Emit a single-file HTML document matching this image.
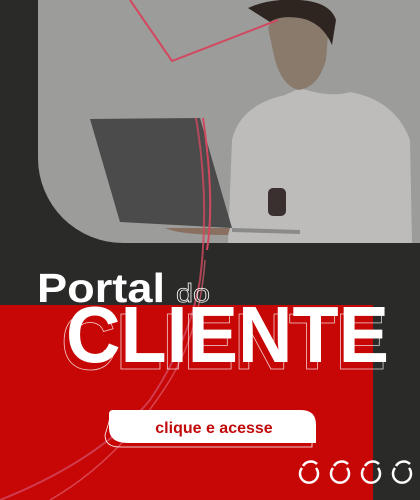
<!DOCTYPE html>
<html><head><meta charset="utf-8"><style>
html,body{margin:0;padding:0}
body{width:420px;height:500px;overflow:hidden;position:relative;background:#2a2b29;font-family:"Liberation Sans",sans-serif}
.abs{position:absolute}
</style></head><body>
<div class="abs" style="left:38px;top:0;width:382px;height:243px;background:#9c9c9a;border-bottom-left-radius:85px"></div>
<div class="abs" style="left:0;top:305px;width:373px;height:195px;background:#c70606"></div>
<svg class="abs" style="left:0;top:0" width="420" height="500">
  <path d="M228 243 L232 140 Q240 105 285 95 L300 88 Q330 98 350 92 Q395 100 410 140 L412 243 Z" fill="#bdbcba"/>
  <path d="M268 28 Q275 12 300 12 Q325 14 328 35 L326 60 Q318 88 298 90 Q282 85 275 60 Z" fill="#8a7a6c"/>
  <path d="M248 8 Q270 -2 300 0 Q330 2 336 20 L332 45 Q322 22 300 18 Q280 15 270 22 Z" fill="#2e2420"/>
  <path d="M90 119 L200 118 L232 228 L120 222 Z" fill="#4b4b4b"/>
  <path d="M232 228 L300 230 L300 234 L232 232 Z" fill="#8a8a8a"/>
  <path d="M165 228 Q180 235 228 235 L230 228 Z" fill="#8a7060"/>
  <rect x="268" y="188" width="18" height="28" rx="5" fill="#3a3030"/>
  <path d="M130 0 L172 61 L278 20" stroke="#d2485f" stroke-width="2" fill="none"/>
  <path d="M196 118 Q210 200 200 280 Q190 340 150 400 Q100 460 0 500" stroke="#d2485f" stroke-width="2" fill="none" opacity=".8"/>
  <path d="M203 118 Q215 200 207 250" stroke="#d2485f" stroke-width="2" fill="none"/>
  <path d="M205 260 Q200 330 170 380 Q120 460 50 500" stroke="#e06070" stroke-width="1.5" fill="none" opacity=".7"/>
  <text x="37" y="302" font-size="41" font-weight="bold" fill="#fff" textLength="128" lengthAdjust="spacingAndGlyphs">Portal</text>
  <text x="176" y="302" font-size="26" fill="none" stroke="#fff" stroke-width="0.7" textLength="34" lengthAdjust="spacingAndGlyphs">do</text>
  <text x="61" y="369" font-size="80" font-weight="bold" fill="none" stroke="#fff" stroke-width="0.8" textLength="325" lengthAdjust="spacingAndGlyphs" opacity=".8">CLIENTE</text>
  <text x="66" y="362" font-size="80" font-weight="bold" fill="#fff" textLength="323" lengthAdjust="spacingAndGlyphs">CLIENTE</text>
  <path d="M109 422 Q109 416 115 416 L312 416 L312 447 L120 447 Q105 447 105 435 Z" fill="none" stroke="#fff" stroke-width="0.8"/>
  <path d="M113 410 L301 410 Q316 410 316 425 L316 443 L128 443 Q109 443 109 428 L109 414 Q109 410 113 410 Z" fill="#fff"/>
  <text x="214" y="433" font-size="16" font-weight="bold" fill="#c20a0a" text-anchor="middle">clique e acesse</text>
  <g fill="none" stroke="#fff" stroke-width="2.5">
    <path d="M302 468 A9 9 0 1 0 316 468"/><path d="M303 466 A9 9 0 0 1 317 464"/>
    <path d="M333 468 A9 9 0 1 0 347 468"/><path d="M334 466 A9 9 0 0 1 348 464"/>
    <path d="M364 468 A9 9 0 1 0 378 468"/><path d="M365 466 A9 9 0 0 1 379 464"/>
    <path d="M395 468 A9 9 0 1 0 409 468"/><path d="M396 466 A9 9 0 0 1 410 464"/>
  </g>
</svg>
</body></html>
